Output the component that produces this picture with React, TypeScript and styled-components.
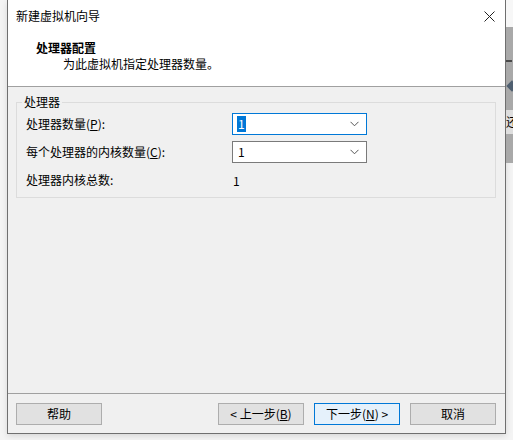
import React from "react";
import styled, { createGlobalStyle } from "styled-components";

const GlobalStyle = createGlobalStyle`
  html, body {
    margin: 0;
    padding: 0;
    background: #f4f4f4;
  }
  body {
    font-family: "Noto Sans CJK SC", "Noto Sans", sans-serif;
    font-size: 12px;
    color: #000;
  }
`;

const Page = styled.div`
  width: 513px;
  height: 440px;
  display: flex;
  overflow: hidden;
  background: #f4f4f4;
`;

const Dialog = styled.div`
  flex-shrink: 0;
  margin-left: 7px;
  width: 497px;
  height: 433px;
  display: flex;
  flex-direction: column;
  background: #f0f0f0;
  border: 1px solid #6f6f6f;
  border-top: none;
  box-shadow: 0 2px 6px rgba(0, 0, 0, 0.12);
`;

const BackWindow = styled.div`
  flex: 1;
  min-width: 0;
  overflow: hidden;
  display: flex;
  flex-direction: column;
`;

const BackTop = styled.div`
  height: 27px;
  background: #f7f7f7;
`;

const BackPanel = styled.div`
  height: 136px;
  background: #a9a9a9;
  display: flex;
  flex-direction: column;
  padding-top: 33px;
  box-sizing: border-box;
  overflow: hidden;
`;

const BackDash = styled.div`
  width: 6px;
  height: 2px;
  background: #4a4a4a;
`;

const BackDiamond = styled.div`
  width: 8px;
  height: 8px;
  margin: 20px 0 0 2px;
  background: #4f5f70;
  transform: rotate(45deg);
`;

/* the window behind the dialog: only its edge shows */
const BackLabel = styled.div`
  margin-top: 20px;
  background: #dedede;
  height: 24px;
  line-height: 24px;
  font-size: 12px;
  white-space: nowrap;
`;

const TitleBar = styled.div`
  height: 32px;
  display: flex;
  align-items: center;
  justify-content: space-between;
  padding: 0 10px 0 8px;
  background: #fff;
`;

const TitleText = styled.span`
  font-size: 12px;
  line-height: 16px;
`;

const Header = styled.div`
  height: 55px;
  background: #fff;
  border-bottom: 1px solid #a0a0a0;
  padding: 8px 0 0 28px;
  box-sizing: border-box;
  display: flex;
  flex-direction: column;
`;

const HeaderTitle = styled.div`
  font-weight: bold;
  font-size: 12px;
  line-height: 16px;
`;

const HeaderSub = styled.div`
  padding-left: 27px;
  font-size: 12px;
  line-height: 15px;
`;

const Body = styled.div`
  flex: 1;
  padding: 8px 9px 0 8px;
`;

const Group = styled.fieldset`
  margin: 0;
  padding: 1px 0 3px 0;
  min-width: 0;
  border: 1px solid #dcdcdc;
`;

const Legend = styled.legend`
  margin-left: 5px;
  padding: 0 2px;
  font-size: 12px;
  line-height: 14px;
`;

const Rows = styled.div`
  display: grid;
  grid-template-columns: 206px 135px;
  grid-auto-rows: 28px;
  align-items: center;
  padding-left: 9px;
`;

const Label = styled.span`
  font-size: 12px;
  line-height: 16px;
`;

const Value = styled.span`
  padding-left: 1px;
  font-size: 12px;
`;

const Combo = styled.div<{ $focused?: boolean }>`
  height: 22px;
  box-sizing: border-box;
  display: flex;
  align-items: center;
  justify-content: space-between;
  padding: 0 7px 0 4px;
  background: #fff;
  border: 1px solid ${(p) => (p.$focused ? "#0078d7" : "#7a7a7a")};
`;

const ComboText = styled.span<{ $selected?: boolean }>`
  font-size: 12px;
  line-height: 16px;
  padding: 0 1px;
  color: ${(p) => (p.$selected ? "#fff" : "#000")};
  background: ${(p) => (p.$selected ? "#0078d7" : "transparent")};
`;

const Footer = styled.div`
  height: 40px;
  border-top: 1px solid #a0a0a0;
  display: flex;
  align-items: center;
  padding: 0 9px 0 8px;
  box-sizing: border-box;
`;

const Spacer = styled.div`
  flex: 1;
`;

const Button = styled.button<{ $default?: boolean }>`
  flex-shrink: 0;
  width: 86px;
  height: 22px;
  padding: 0;
  font-family: inherit;
  font-size: 12px;
  color: #000;
  background: ${(p) => (p.$default ? "#e5f1fb" : "#e1e1e1")};
  border: 1px solid ${(p) => (p.$default ? "#0078d7" : "#adadad")};
  & + & {
    margin-left: 10px;
  }
`;

const Chevron = () => (
  <svg width="9" height="6" viewBox="0 0 9 6">
    <polyline points="0.5,0.8 4.5,4.8 8.5,0.8" fill="none" stroke="#555" strokeWidth="1" />
  </svg>
);

const CloseIcon = () => (
  <svg width="11" height="11" viewBox="0 0 11 11">
    <path d="M0.5 0.5 L10.5 10.5 M10.5 0.5 L0.5 10.5" stroke="#222" strokeWidth="1" />
  </svg>
);

export default function App() {
  return (
    <>
      <GlobalStyle />
      <Page>
        <Dialog>
          <TitleBar>
            <TitleText>新建虚拟机向导</TitleText>
            <CloseIcon />
          </TitleBar>
          <Header>
            <HeaderTitle>处理器配置</HeaderTitle>
            <HeaderSub>为此虚拟机指定处理器数量。</HeaderSub>
          </Header>
          <Body>
            <Group>
              <Legend>处理器</Legend>
              <Rows>
                <Label>
                  处理器数量(<u>P</u>):
                </Label>
                <Combo $focused>
                  <ComboText $selected>1</ComboText>
                  <Chevron />
                </Combo>
                <Label>
                  每个处理器的内核数量(<u>C</u>):
                </Label>
                <Combo>
                  <ComboText>1</ComboText>
                  <Chevron />
                </Combo>
                <Label>处理器内核总数:</Label>
                <Value>1</Value>
              </Rows>
            </Group>
          </Body>
          <Footer>
            <Button>帮助</Button>
            <Spacer />
            <Button>
              &lt; 上一步(<u>B</u>)
            </Button>
            <Button $default>
              下一步(<u>N</u>) &gt;
            </Button>
            <Button>取消</Button>
          </Footer>
        </Dialog>
        <BackWindow>
          <BackTop />
          <BackPanel>
            <BackDash />
            <BackDiamond />
            <BackLabel>还</BackLabel>
          </BackPanel>
        </BackWindow>
      </Page>
    </>
  );
}
